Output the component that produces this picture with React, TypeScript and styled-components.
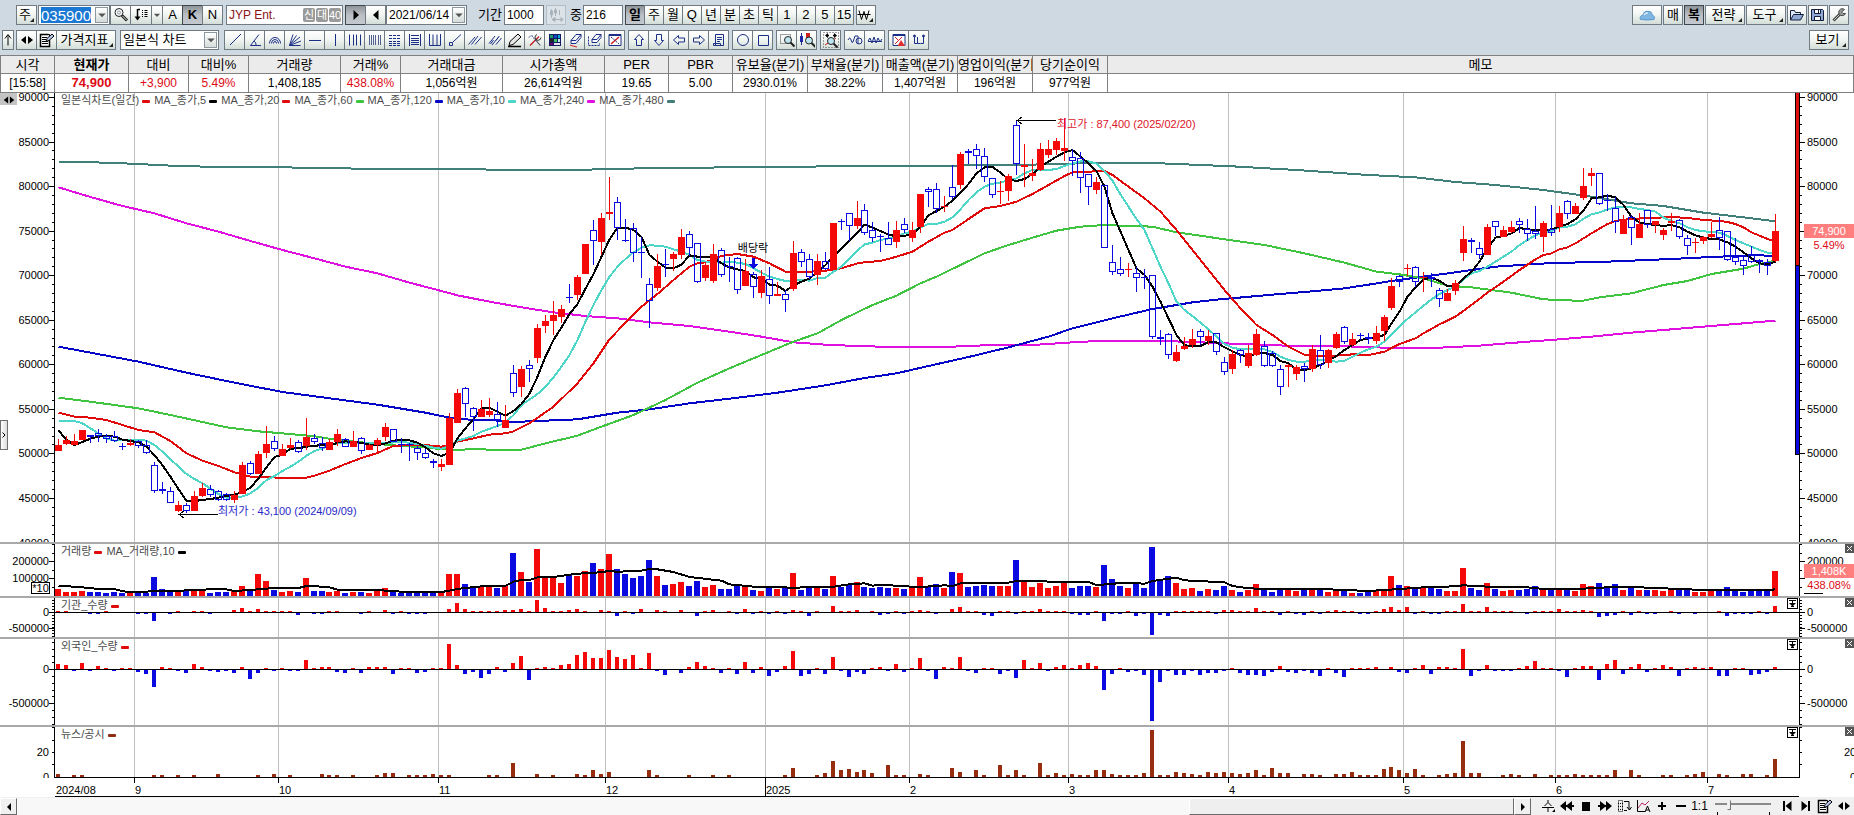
import React from 'react';
import styled, { createGlobalStyle, css } from 'styled-components';

const SANS = '"Liberation Sans", Arial, "Noto Sans CJK KR", sans-serif';
const RED = '#f50808';
const BLUE = '#0a0ae0';
const NAVY = '#1c2f86';

const GlobalStyle = createGlobalStyle`
  * { box-sizing: border-box; }
  body { margin: 0; background: #fff; font-family: ${SANS}; font-size: 13px; color: #000; }
  button, input, select { font-family: inherit; font-size: inherit; color: inherit; }
`;

/* ------------------------------------------------------------------ */
/* Market data                                                         */
/* ------------------------------------------------------------------ */

/* One entry per trading day: direction, high, body top, body bottom, low.
   Levels count down from the top of the scale, three to a pixel. */
const CANDLES = `
r1047,1065,1082,1082 r1038,1050,1062,1066 r1032,1053,1064,1066 r1020,1020,1049,1049 b1035,1036,1040,1060 b1018,1030,1037,1055
b1032,1037,1046,1058 b1022,1037,1054,1056 b1058,1067,1070,1080 r1046,1060,1064,1068 b1050,1053,1069,1074 b1050,1066,1090,1092
b1117,1126,1202,1208 b1176,1197,1203,1211 b1192,1204,1238,1240 r1234,1245,1264,1266 b1238,1246,1262,1268 r1203,1218,1263,1263
r1179,1194,1218,1221 b1186,1198,1216,1222 b1200,1204,1230,1234 b1208,1213,1231,1234 r1203,1216,1231,1238 r1117,1126,1211,1213
b1113,1120,1153,1155 r1082,1092,1152,1152 r1008,1062,1090,1103 b1038,1054,1078,1084 r1062,1077,1097,1099 r1044,1066,1073,1076
b1050,1057,1087,1090 r984,1041,1069,1080 b1033,1043,1056,1062 b1040,1060,1075,1082 r1047,1056,1079,1081 r1017,1032,1056,1069
b1045,1047,1070,1070 r1023,1053,1070,1070 b1040,1043,1084,1092 r1062,1064,1079,1080 r1043,1051,1064,1090 r998,1011,1042,1052
b1018,1018,1057,1057 b1045,1062,1065,1090 b1060,1062,1064,1112 b1067,1073,1089,1109 b1078,1089,1103,1107 b1107,1112,1120,1133
r1108,1121,1131,1144 r970,984,1124,1124 r897,909,998,998 b892,895,943,980 b952,955,982,1022 r931,957,980,982
r924,963,976,982 b936,973,991,1012 r946,990,1013,1013 b826,850,908,922 r828,837,892,920 b810,826,838,876
r702,714,803,818 r676,694,708,730 r633,675,692,734 r645,657,681,700 b582,620,623,638 r555,561,614,629
r461,462,551,553 b391,421,454,526 r370,384,455,496 r261,367,371,390 b321,337,415,450 b387,450,453,455
b400,415,490,515 b440,485,490,564 b565,583,634,713 r491,528,593,603 b476,521,524,560 r486,493,506,544
r417,441,494,507 b422,433,475,497 b460,460,577,579 r516,525,563,574 r462,492,573,578 b474,481,556,560
b500,527,530,577 b500,503,601,612 r506,543,587,587 b545,553,592,624 r540,558,608,624 b530,566,619,641
r577,613,617,619 b600,613,631,665 r453,489,596,604 b477,485,517,530 b492,506,560,566 r492,514,555,585
b487,514,536,540 r399,399,540,540 b387,392,395,420 b370,370,409,453 r333,384,407,417 b342,361,430,434
b395,419,443,455 b432,439,442,486 b396,445,464,466 r392,420,455,475 b384,403,421,430 r397,420,443,455
r312,312,412,430 b291,298,307,350 b280,298,358,370 r318,349,352,366 b224,290,322,328 r186,193,284,297
b178,184,190,222 b163,178,199,238 b175,199,262,275 b265,265,316,324 r273,303,307,343 r253,258,302,333
b90,106,223,255 r163,226,230,290 r207,249,258,272 r159,177,241,244 r150,177,194,203 r144,153,179,196
r85,174,183,212 b178,200,212,258 b186,203,265,308 b253,253,292,345 r262,275,299,311 b286,286,473,475
b466,515,547,555 b501,538,553,557 r519,537,540,560 b530,550,563,606 b537,560,563,597 b556,556,742,746
b720,742,748,765 b730,733,796,806 r765,787,812,815 r741,769,778,780 r717,748,766,774 b716,722,742,765
r721,739,753,765 b730,730,787,794 b802,815,845,854 r780,793,836,851 b777,780,796,818 r766,790,827,833
r717,732,796,797 b754,769,829,832 b784,790,827,830 b824,838,892,914 r823,825,832,890 r826,832,851,869
b820,829,837,876 r765,778,838,847 b735,781,826,838 r778,781,818,833 r727,732,773,778 b708,712,755,762
r730,747,765,769 b730,734,738,751 b730,742,748,762 r708,730,752,762 r675,682,724,752 r565,588,653,659
b554,557,577,590 r523,535,538,557 b527,532,577,590 r545,560,564,605 b549,560,568,590 b594,601,628,650
r597,610,632,633 r571,580,602,614 r408,447,488,512 b445,449,455,488 b457,475,496,508 r402,411,494,495
b394,394,412,438 r408,420,440,440 r394,411,426,430 b384,392,406,430 b386,418,433,452 b348,422,431,447
r394,399,440,486 b345,418,430,437 r348,369,410,425 b331,334,373,386 r339,348,371,373 r234,288,323,329
r234,250,259,288 b250,250,341,345 b313,330,333,362 b322,355,395,429 r375,391,431,432 b375,380,415,465
r370,402,443,444 b361,361,405,413 r392,394,404,429 r414,420,434,449 r369,394,398,423 b387,391,442,446
b435,443,468,494 r443,455,458,489 r437,441,452,461 r396,432,440,445 b381,421,443,480 b424,424,510,513
b443,500,517,525 b495,510,527,554 b467,494,517,520 b507,511,516,548 b507,516,529,554 r372,423,514,516`
  .trim().split(/\s+/)
  .map(s => ({ up: s[0] === 'r', v: s.slice(1).split(',').map(Number) }));

/* Lines are "day:level" pairs. */
type Pair = [number, number];
const pairs = (s: string): Pair[] =>
  s.trim().split(/\s+/).map(p => p.split(':').map(Number) as Pair);
const series = (s: string): Pair[] =>
  s.trim().split(/\s+/).map((v, i) => [i, Number(v)] as Pair);

const MA_LINES = [
  { color: '#417f7a', points: pairs('0:216 3:216 7:219 10:222 13:226 17:229 21:232 28:232 35:235 45:238 52:237 55:240 66:239 73:235 84:232 97:229 108:228 118:225 124:223 128:220 137:219 142:224 147:229 155:240 164:255 170:262 175:276 180:285 186:300 192:320 197:340 201:348 206:368 211:382 215:394') },
  { color: '#e010e0', points: pairs('0:292 4:321 8:348 12:370 16:400 20:425 24:453 28:480 32:505 36:530 40:550 44:578 48:603 50:616 54:635 58:652 62:667 66:678 70:685 74:697 79:708 84:725 88:740 92:757 96:764 101:769 106:771 112:770 117:765 122:765 127:757 131:752 137:752 142:756 146:760 150:764 155:768 160:768 166:773 173:773 178:767 183:757 188:748 192:740 197:728 202:718 207:708 211:700 215:692') },
  { color: '#0606c8', points: pairs('0:770 4:788 10:815 16:848 22:878 28:906 35:928 40:944 46:968 49:983 52:990 54:990 57:996 61:992 65:988 70:968 74:958 79:940 84:926 90:908 96:886 101:864 105:850 109:828 114:801 119:772 124:740 127:715 132:685 137:657 142:637 145:629 151:616 156:606 161:595 164:584 167:573 170:563 175:547 180:530 185:522 188:518 192:517 197:512 202:507 207:501 212:496 215:497') },
  { color: '#3fc440', points: pairs('0:923 3:932 7:945 10:955 14:975 18:996 21:1012 25:1024 28:1030 32:1039 35:1050 40:1062 43:1068 46:1072 48:1078 50:1080 52:1077 54:1079 58:1079 61:1060 65:1037 68:1010 72:975 76:930 80:878 84:835 88:795 92:755 95:730 98:690 102:645 105:617 108:580 110:560 113:525 116:490 119:465 122:443 125:422 128:410 131:405 133:407 137:410 140:427 143:437 146:448 151:465 156:490 161:518 165:545 168:553 171:565 174:587 177:592 182:608 186:628 190:632 191:632 193:622 197:610 201:585 204:573 207:552 211:536 213:522 215:512') },
  { color: '#e00a0a', points: pairs('0:968 2:980 4:983 6:990 8:1005 10:1020 12:1027 14:1053 16:1090 18:1112 20:1128 22:1147 24:1160 26:1161 28:1164 31:1163 32:1157 34:1142 36:1122 38:1104 40:1089 41:1078 42:1068 44:1065 46:1065 48:1070 49:1066 50:1055 52:1045 54:1034 56:1030 57:1024 59:1000 62:950 65:880 67:820 69:748 71:698 73:650 75:612 77:570 79:530 80:520 81:517 83:498 85:492 87:500 89:520 91:545 94:545 96:542 98:535 100:520 101:517 103:513 105:500 107:485 108:470 109:455 111:428 112:420 114:387 116:355 118:348 120:335 122:312 124:285 126:258 127:247 129:245 131:243 132:255 134:290 136:325 138:365 140:420 142:480 144:540 146:600 148:655 150:705 152:735 154:770 156:794 158:798 160:797 162:793 164:795 166:785 168:762 170:745 171:730 173:703 175:680 177:645 179:608 181:575 183:540 185:508 186:495 187:490 188:478 189:472 190:460 191:445 192:430 194:402 195:393 197:386 199:385 201:382 202:381 204:384 206:390 208:393 209:396 210:402 211:412 212:427 213:437 214:447 215:454') },
  { color: '#4bd6c8', points: pairs('0:993 2:993 3:1000 4:1015 5:1030 6:1045 7:1052 9:1049 10:1049 11:1052 12:1065 13:1085 14:1108 15:1130 16:1152 17:1167 18:1180 19:1196 20:1212 21:1223 22:1224 23:1219 24:1210 25:1193 26:1170 27:1158 28:1143 29:1130 30:1115 31:1097 32:1083 33:1075 34:1066 35:1060 38:1060 41:1060 43:1055 45:1062 47:1073 48:1076 49:1068 50:1052 51:1045 52:1038 53:1025 55:1008 56:998 57:975 58:945 60:912 61:890 62:862 63:830 64:795 65:750 66:695 67:645 68:600 69:560 70:530 71:507 72:487 73:473 74:466 75:467 76:470 77:478 78:485 79:495 80:510 81:515 83:518 84:516 85:518 86:522 87:535 88:548 89:560 90:567 91:573 93:570 94:572 95:564 96:563 97:545 98:530 99:505 100:482 101:463 102:458 103:450 104:445 105:440 106:430 107:425 108:412 109:402 110:402 111:395 112:382 113:358 114:330 115:307 116:290 117:281 118:278 119:270 120:265 121:250 122:240 124:240 125:237 126:228 127:220 128:214 129:214 130:221 131:243 132:272 133:313 134:350 135:387 136:420 137:475 138:530 139:580 140:635 141:660 142:678 143:698 144:718 145:740 146:762 147:773 148:778 150:776 151:778 152:786 153:800 154:810 155:815 156:815 158:810 160:815 161:812 162:800 163:788 164:778 165:770 166:755 167:733 168:709 169:687 170:667 171:647 172:628 173:612 174:600 175:590 176:568 177:550 178:543 179:530 180:515 181:500 182:485 183:465 184:450 185:436 186:428 187:423 188:412 189:410 190:403 191:386 192:373 193:367 194:358 195:352 197:352 198:357 199:360 200:365 201:383 202:393 203:400 204:412 205:420 206:424 207:426 208:428 209:438 210:450 211:460 212:470 213:480 214:488 215:489') },
  { color: '#000', points: series('1021 1050 1065 1056 1046 1040 1038 1040 1049 1053 1057 1070 1096 1126 1160 1198 1232 1233 1230 1227 1223 1218 1214 1206 1193 1165 1132 1101 1094 1076 1075 1070 1068 1064 1068 1058 1054 1057 1058 1064 1066 1060 1052 1049 1051 1058 1072 1090 1098 1088 1045 1015 987 955 953 965 977 963 942 911 860 800 750 712 672 642 596 552 500 448 413 413 420 441 495 515 533 535 524 496 500 500 502 520 533 538 543 562 566 584 587 603 586 575 566 545 525 500 475 452 428 404 413 423 434 439 437 435 410 376 363 350 332 308 282 250 232 231 248 268 273 267 252 230 215 200 187 180 200 220 243 290 370 425 480 535 555 590 635 685 735 766 768 768 756 757 772 784 795 799 790 789 795 813 820 838 840 834 825 812 798 780 765 750 745 741 735 700 665 620 592 568 563 573 588 590 565 545 515 475 443 438 430 414 418 420 421 418 410 402 388 362 325 322 317 322 345 380 398 402 405 408 405 412 425 436 443 447 448 457 470 487 505 520 523 515') },
];

const VOLUME_TOPS = `177 185 185 181 185 185 188 186 188 188 188 187 141 177 180 181 182 181 183 188 186 186 182 168 180 132 153 180 186 183 186 144 182 183 186 183 188 186 186 188 180 174 184 187 187 187 187 187 187 132 132 162 166 168 168 174 166 69 126 156 57 143 141 159 132 138 123 99 117 72 117 132 144 136 88 138 165 162 156 168 153 171 165 177 177 165 171 180 183 174 177 174 129 178 171 171 177 138 171 164 156 171 174 171 174 174 177 174 141 168 162 174 126 129 171 168 165 168 168 168 88 153 171 157 174 168 156 174 168 168 171 105 147 168 174 160 174 51 146 138 159 177 174 183 177 180 168 180 186 178 162 179 186 179 180 183 180 178 180 186 182 180 189 189 185 183 175 138 165 168 175 173 168 177 183 183 114 174 180 159 177 183 180 180 177 168 178 178 177 180 183 162 168 159 174 162 180 174 180 180 180 183 177 180 180 186 186 183 183 171 182 186 183 182 182 123`
  .split(' ').map(Number);

const VOLUME_MA = pairs('0:167 3:172 5:177 7:177 8:184 9:186 12:184 15:182 18:180 19:177 21:178 22:183 24:180 27:174 30:174 31:168 33:170 34:172 35:179 40:180 41:182 43:185 48:186 49:182 50:177 51:174 53:169 56:167 57:155 58:150 59:150 60:142 62:141 64:134 66:129 68:127 69:122 70:126 71:124 73:122 74:117 75:118 77:126 79:141 83:152 84:163 87:170 92:173 97:170 99:163 101:160 102:167 103:164 106:169 108:171 111:166 112:168 113:160 116:158 119:158 120:153 122:154 129:156 130:165 132:162 133:158 136:161 137:153 140:143 141:151 146:157 147:168 149:175 153:178 158:177 164:183 168:177 171:172 174:170 176:166 179:170 184:172 186:177 191:176 194:172 198:172 202:176 206:180 214:180 215:178');

const INSTITUTION = pairs('0:3 1:2 4:-4 5:-4 6:3 10:-4 11:-4 12:-25 14:-3 15:3 17:3 18:3 19:-4 22:6 23:12 24:3 25:10 26:3 27:3 28:3 29:3 30:-7 32:-3 33:-3 34:4 35:4 38:-3 39:3 41:6 42:-3 43:4 44:-4 45:-4 46:-4 49:9 50:27 51:9 52:3 53:3 54:3 55:3 56:6 57:6 58:9 59:3 60:36 61:12 62:3 63:3 64:6 65:10 66:3 68:6 69:3 70:-10 71:3 72:-4 73:10 75:6 76:3 78:6 80:-10 81:3 82:6 84:3 85:-4 86:10 87:-3 88:3 89:-4 90:3 91:-4 92:6 93:3 94:-9 95:3 97:18 98:3 99:3 100:6 102:3 103:-6 104:-4 105:3 106:-4 107:3 108:6 109:3 110:-4 112:9 113:15 114:3 115:3 116:-6 117:-10 118:3 119:3 120:-4 121:3 122:3 123:9 124:3 125:3 126:3 127:-4 128:-6 129:-6 130:3 131:-25 132:-4 133:-4 134:3 135:-10 136:-4 137:-67 138:-6 139:-10 140:3 141:3 142:3 143:3 144:3 145:-4 146:6 147:6 148:3 149:3 150:12 151:3 152:3 153:-7 154:3 155:-4 156:-7 157:3 158:-4 159:3 160:6 161:3 162:3 163:-4 164:-4 165:3 166:9 167:15 168:6 169:15 170:-4 171:3 172:-4 173:-4 174:3 175:3 176:24 177:3 178:3 179:15 180:3 181:3 182:3 184:-4 185:3 186:3 187:3 188:9 189:3 190:3 191:6 192:3 193:-13 194:-10 195:-7 196:3 197:-7 198:3 199:-3 200:-3 202:3 203:-4 205:-4 208:3 209:-10 210:-4 211:-4 212:-4 213:3 214:-4 215:18');

const FOREIGN = pairs('0:15 1:12 2:-4 3:18 4:-4 5:9 6:3 7:-4 8:3 9:3 10:-7 11:-13 12:-52 13:6 14:3 15:-3 16:-10 17:15 18:6 19:-4 20:-7 21:-4 22:-10 23:6 24:-28 25:-10 26:3 27:-4 28:3 29:-4 30:-4 31:27 32:4 33:6 34:6 35:-7 36:-10 37:3 38:-10 39:6 40:6 41:6 42:-13 43:3 44:3 45:-10 46:-7 47:3 48:3 49:75 50:12 51:-13 52:-7 53:-25 54:-13 55:6 56:-7 57:18 58:39 59:-31 60:4 61:6 62:4 63:12 64:15 65:42 66:51 67:33 68:33 69:57 70:37 71:30 72:42 73:3 74:48 75:-4 76:-16 78:-10 79:6 80:21 81:9 82:3 83:-10 84:3 85:-13 86:21 87:-10 88:6 89:-19 90:-7 91:9 92:54 93:-19 94:-13 95:3 96:-13 97:37 98:-4 99:-22 100:-7 101:-13 102:3 103:6 104:-4 105:15 106:-7 107:3 108:34 109:-4 110:-28 111:6 112:3 113:37 114:-4 115:-10 116:3 117:3 118:-13 119:-4 120:-25 121:27 122:3 123:18 124:-4 125:6 126:12 127:3 128:12 129:18 130:9 131:-61 132:-13 133:3 134:-7 135:-4 136:-16 137:-152 138:-37 139:-4 140:-16 141:-16 142:-4 143:-16 144:-10 145:-10 146:-4 147:3 148:-10 149:-16 150:-16 151:-19 152:-7 153:9 154:-7 155:-10 156:-4 157:-10 158:-19 159:3 160:-10 161:-22 162:3 163:3 164:3 165:6 167:6 168:-7 169:-10 170:3 171:12 172:-13 173:6 174:6 175:3 176:60 177:-19 178:-4 179:12 180:-4 181:-4 182:-4 183:3 184:9 185:24 186:3 187:3 188:-4 189:-22 190:3 191:9 192:9 193:-31 194:15 195:27 196:-13 197:6 198:15 199:-7 200:3 201:12 202:6 203:-19 204:3 205:6 206:3 207:6 208:-19 209:-19 210:3 211:3 212:-16 213:-13 214:-7 215:6');

const NEWS = pairs('0:9 2:6 3:6 12:6 13:6 15:6 17:6 20:9 25:6 27:9 29:6 33:9 34:6 35:6 37:6 40:6 41:12 42:12 44:6 45:6 46:6 47:9 48:6 49:6 54:6 55:6 57:42 60:9 62:6 65:9 66:6 67:21 68:9 69:15 74:21 75:6 79:6 82:6 84:6 91:6 92:27 95:6 96:12 97:48 98:21 99:24 100:15 101:21 102:12 104:36 105:6 106:6 108:9 109:6 112:27 113:15 115:21 116:6 118:36 119:6 120:21 121:6 123:42 124:6 125:12 126:6 127:9 128:6 129:6 130:21 131:21 132:9 133:6 134:6 135:6 136:12 137:141 138:6 139:6 140:15 141:12 142:9 143:6 144:15 145:12 146:15 147:12 148:9 149:12 150:21 151:6 152:27 153:12 154:12 156:9 157:9 158:6 160:9 161:9 162:15 163:6 164:6 165:6 166:24 167:30 168:21 169:12 170:24 171:6 173:6 174:9 175:12 176:108 177:12 178:12 181:6 182:9 183:6 185:9 187:6 188:6 189:6 190:9 191:6 192:6 193:6 194:6 195:21 197:21 198:6 201:6 202:6 204:6 205:9 206:15 208:9 209:6 211:9 212:9 214:6 215:54');

const MONTHS = [
  { x: 79, label: '9' }, { x: 223, label: '10' }, { x: 383, label: '11' }, { x: 550, label: '12' },
  { x: 710, label: '2025', year: true }, { x: 854, label: '2' }, { x: 1013, label: '3' },
  { x: 1173, label: '4' }, { x: 1348, label: '5' }, { x: 1500, label: '6' }, { x: 1652, label: '7' },
];

const QUOTE = [
  { head: '시각', value: '[15:58]', w: 55 },
  { head: '현재가', value: '74,900', w: 74, red: true, strong: true },
  { head: '대비', value: '+3,900', w: 60, red: true },
  { head: '대비%', value: '5.49%', w: 60, red: true },
  { head: '거래량', value: '1,408,185', w: 92 },
  { head: '거래%', value: '438.08%', w: 60, red: true },
  { head: '거래대금', value: '1,056억원', w: 102 },
  { head: '시가총액', value: '26,614억원', w: 102 },
  { head: 'PER', value: '19.65', w: 64 },
  { head: 'PBR', value: '5.00', w: 64 },
  { head: '유보율(분기)', value: '2930.01%', w: 75 },
  { head: '부채율(분기)', value: '38.22%', w: 75 },
  { head: '매출액(분기)', value: '1,407억원', w: 75 },
  { head: '영업이익(분기)', value: '196억원', w: 75 },
  { head: '당기순이익', value: '977억원', w: 75 },
  { head: '메모', value: '', w: 0 },
];

/* ------------------------------------------------------------------ */
/* Icons                                                               */
/* ------------------------------------------------------------------ */

const Svg = styled.svg`
  display: block;
  flex: none;
  fill: none;
  stroke: ${NAVY};
  stroke-width: 1;
`;

const lens = (x: number, y: number) => (
  <g>
    <circle cx={x} cy={y} r="3.5" fill="#bfe6f0" stroke="#222" />
    <path d={`M${x + 2.5} ${y + 2.5}l4 4`} stroke="#222" strokeWidth="2" />
  </g>
);

const ICONS: Record<string, React.ReactNode> = {
  search: <g stroke="#222"><circle cx="6" cy="5.5" r="4" fill="#f4f8ff" /><circle cx="6" cy="5.5" r="1.5" stroke="#999" /><path d="M9 8.5l5 5" strokeWidth="3" /><path d="M9.500 9l4 4" stroke="#ddd" /></g>,
  listDown: <g stroke="#000"><path d="M4.500 2v10M5 2.500h2" strokeWidth="1.500" /><path d="M1.500 9.500l3 4 3-4z" fill="#000" stroke="none" /><path d="M9 3.500h1M11.500 3.500h3M9 5.500h1M11.500 5.500h3M9 7.500h1M11.500 7.500h3M9 9.500h1M11.500 9.500h3" /></g>,
  chevron: <path d="M3 6h10l-5 5z" fill="#555" stroke="none" />,
  play: <path d="M5.500 3l5.500 5-5.500 5z" fill="#000" stroke="none" />,
  back: <path d="M10.500 3L5 8l5.500 5z" fill="#000" stroke="none" />,
  candlesMove: <g stroke="#a9b3bb" fill="#a9b3bb"><path d="M3.500 2v9M7.500 1v8M11.500 3v5M6 12.500h8M4 12.500l3-2v4zM15 12.500l-2-2v4z" /><path d="M2.500 4h2v4h-2zM6.500 3h2v3h-2z" /></g>,
  won: <g stroke="#000"><path d="M3 3.500l2.500 9 2.500-8 2.500 8 2.500-9" /><path d="M1.500 7.500h13" /></g>,
  up: <path d="M8 13.500v-10M5 6.500l3-4 3 4" stroke="#000" />,
  leftRight: <path d="M7 4v8L2 8zM9 4v8l5-4z" fill="#000" stroke="none" />,
  memo: <g stroke="#000"><path d="M1.500 2.500h9v12h-9z" fill="#fff" /><path d="M10.500 8v6.500h-9v-12h8" strokeWidth="1.500" /><path d="M3 5.500h5M3 7.500h4M3 9.500h6M3 11.500h6" /><path d="M7 9.500l1-3 5-4.500 2 2-5 4.500z" fill="#b9c9ee" /></g>,
  line: <path d="M3 13L14 2" />,
  angle: <path d="M12 2.500L3.500 13.500H14M7 9q2.500 1.500 2 4.500" />,
  arcs: <g><path d="M2.500 11.500a5.500 6 0 0 1 11 0M4.500 11.500a3.500 4 0 0 1 7 0M6.500 11.500a1.500 2 0 0 1 3 0" /></g>,
  fan: <path d="M2.500 13.500L6 2.500M2.500 13.500l7-10M2.500 13.500L13 5M2.500 13.500L14 9M2.500 13.500h11" />,
  hline: <path d="M2 8.500h12" />,
  vline: <path d="M8.500 2v12" />,
  vlines4: <path d="M2.500 2.500v11M6.500 2.500v11M9.500 2.500v11M13.500 2.500v11" />,
  vlines6: <path d="M2.500 3v10M4.500 3v10M6.500 3v10M8.500 3v10M11.500 3v10M13.500 3v10" stroke="#51608f" />,
  fib: <path d="M2 3.500h12M2 13.500h12M2 6.500h12M2 9.500h12M2 11.500h12" strokeDasharray="3 1" />,
  fibBox: <path d="M2.500 2v12M13.500 2v12M4 3.500h8M4 6.500h8M4 8.500h8M4 10.500h8M4 12.500h8" />,
  cycle: <path d="M2.500 2v11.500h3.500V2.500M6 13.500h4V2.500M10 13.500h3.500V2" />,
  trend: <g><path d="M2.500 10.500h3v3h-3z" /><path d="M6 10l8-7.500" /></g>,
  parallel: <path d="M1.500 12.500L8 5M4.500 12.500L11 4M8 12.500L14.500 5" />,
  parallel2: <path d="M2 11.500L8 4M5 13L12 4.500M9 12.500L14.500 6M3.500 12l3-4M9 8.500l3-4" />,
  pencil: <g stroke="#000"><path d="M3 9.500l8-7.500 3 3-8 7.500-4 1z" fill="#e8e8e8" /><path d="M1 14.500h13" strokeWidth="1.500" /></g>,
  tools: <g><path d="M3 13.500l9-9" stroke="#c02020" strokeWidth="1.500" /><path d="M2 5.500q3-4 5 1l6 7" stroke={NAVY} strokeDasharray="2 1" /><path d="M8 7l5 6" stroke="#555" /><path d="M10 2.500a3 3 0 1 0 4 3" stroke="#333" /></g>,
  palette: <g stroke="none"><path d="M2 2h12v12H2z" fill="#111c60" /><path d="M3 3h3v3H3z" fill="#1e9f6a" /><path d="M7 3h3v3H7z" fill="#1848c0" /><path d="M11 3h2v3h-2z" fill="#0ad" /><path d="M3 7h3v3H3z" fill="#222" /><path d="M7 7h3v3H7z" fill="#40c060" /><path d="M11 7h2v3h-2z" fill="#bfe8e8" /><path d="M3 11h3v2H3z" fill="#700070" /><path d="M7 11h6v2H7z" fill="#e8e0f0" /></g>,
  eraser: <g><path d="M4 8.500l5-6h5l-5 6zM4 8.500v3h5l5-6v-3" fill="#eef2fb" /><path d="M3 13l3 1 4 1" stroke="#d02020" /></g>,
  eraseAll: <g><path d="M5 7.500l4-5h5l-4 5zM5 7.500v3h5l4-5v-3" fill="#fff" /><path d="M1.500 4.500v9h11v-2" strokeDasharray="2 1" /></g>,
  chartX: <g><path d="M2 2.500h12v11H2z" fill="#fff" /><path d="M2 3h12" strokeWidth="2" /><path d="M4 12l8-7" stroke="#d02020" strokeWidth="1.500" /><path d="M4 5l8 7" strokeDasharray="2 1" /></g>,
  arrowUp: <path d="M8 2.500l4.500 5h-2v6h-5v-6h-2z" />,
  arrowDown: <path d="M8 13.500l4.500-5h-2v-6h-5v6h-2z" />,
  arrowLeft: <path d="M2.500 8l5-4.500v2.500h6v4h-6v2.500z" />,
  arrowRight: <path d="M13.500 8l-5-4.500v2.500h-6v4h6v2.500z" />,
  note: <g><path d="M4.500 2.500h8v11h-8z" /><path d="M6 5.500h5M6 7.500h5M6 9.500h3M2.500 11.500v2h7v-2z" /></g>,
  circle: <circle cx="8" cy="8" r="5.500" />,
  square: <path d="M3.500 3.500h10v10h-10z" />,
  zoomArea: <g><path d="M1.500 2.500h10v9h-10z" stroke="#444" strokeDasharray="1 1" />{lens(9, 8)}</g>,
  zoomCandle: <g><path d="M1 4h3v6H1z" fill="#2020c0" stroke="none" /><path d="M2.500 1v12" /><path d="M7 1h4v5H7z" fill="#d02020" stroke="none" />{lens(10, 8.500)}</g>,
  zoomFit: <g><path d="M.5.5h15v15H.5z" stroke="#444" strokeDasharray="1 2" /><path d="M3 3.500h3M10 3.500h3" stroke="#000" strokeWidth="1.500" /><path d="M2 3.500l3-2.500v5zM14 3.500l-3-2.500v5z" fill="#000" stroke="none" /><path d="M2 13L13 6" stroke="#d02020" />{lens(8, 9)}</g>,
  waveInfo: <g><path d="M1 8q2-4 3 0t2 2l2-6h3v8" /><circle cx="12" cy="9" r="3" /></g>,
  waves: <path d="M1 9.500h14M1 9l2-3 2 5 2-6 2 6 2-5 2 4 2-3" />,
  chartAlert: <g><path d="M2 2.500h12v11H2z" fill="#fff" /><path d="M2 3h12" strokeWidth="2" /><path d="M4 12l7-7M4 5l4 4" stroke="#d02020" /><path d="M10 8l4 6H6.500z" fill="#e03030" stroke="none" /></g>,
  signal: <g><path d="M3.500 5v6.500h3V5M9.500 11.500h3V5M6.500 11.500h3" /><circle cx="3.500" cy="4" r="1" fill={NAVY} /><circle cx="12.500" cy="4" r="1" fill={NAVY} /></g>,
  cloud: <g><path d="M1.500 12.500q-1.500-3.500 2.500-4.500 1-4.500 5-3.500 4-.500 4 3.500 3.500 1 2 4.500-7 1-13.500 0z" fill="#7fb6e2" stroke="#5b97cc" /><path d="M5 8q1-2.500 4-2" stroke="#d8ecfa" strokeWidth="1.500" /></g>,
  folder: <g stroke="#141c3c"><path d="M1.500 13V3.500h4l1 2h5v2" fill="#dfe8f6" /><path d="M1.500 13l3-5.500h10l-3 5.500z" fill="#8fa8d4" /></g>,
  save: <g stroke="#141c3c"><path d="M1.500 2.500h11l1 1v10h-12z" fill="#8fa8d4" /><path d="M4.500 2.500h6v4h-6zM4.500 9.500h6v4h-6z" fill="#fff" /><path d="M8.500 3v3" /></g>,
  wrench: <g><path d="M2.500 13.500L9 7" stroke="#444" strokeWidth="3" /><path d="M3 13l6-6" stroke="#ccc" /><path d="M13.500 2.500a3.500 3.500 0 1 0 1 4L12 6.500 10.500 5z" fill="#999" stroke="#444" /></g>,
  collapse: <g stroke="#000"><path d="M2 9.500h12M8 4.500L4.500 8M8 4.500L11.500 8M8 2v2.500M8 10v4" /><path d="M12 14h3v-3z" fill="#000" stroke="none" /></g>,
  rewind: <path d="M7 3v4h1l5-4v4h2v2h-2v4L8 9H7v4L1 8z" fill="#000" stroke="none" />,
  forward: <path d="M9 3v4H8L3 3v4H1v2h2v4l5-4h1v4l6-5z" fill="#000" stroke="none" />,
  stop: <path d="M4 4h8v9H4z" fill="#000" stroke="none" />,
  compress: <g stroke="#000"><path d="M2.500 2.500h4v11h-4zM2 5.500h5M2 8.500h5M2 11.500h5" strokeDasharray="1 1" /><path d="M8 3.500h5v8M8 12.500h3M11 9l2.500 3 2-3" /></g>,
  chartA: <g><path d="M2.500 2v11.500H10" stroke="#000" /><path d="M3 10l4-5 3 2 4-4" stroke="#c02060" /><path d="M10 14l2.500-6 2.500 6M11 12h3" stroke="#000" /></g>,
  plus: <path d="M4 8h8M8 4v8" stroke="#000" strokeWidth="2" />,
  minus: <path d="M3 8h10" stroke="#000" strokeWidth="2" />,
  first: <path d="M4 3h2v10H4zM12.500 3v10L6.500 8z" fill="#000" stroke="none" />,
  last: <path d="M10 3h2v10h-2zM3.500 3v10l6-5z" fill="#000" stroke="none" />,
  scrollLeft: <path d="M10 4v8L6 8z" fill="#000" stroke="none" />,
  scrollRight: <path d="M6 4v8l4-4z" fill="#000" stroke="none" />,
};

const Icon = ({ name, size = 16 }: { name: string; size?: number }) => (
  <Svg width={size} height={size} viewBox="0 0 16 16" aria-hidden="true">{ICONS[name]}</Svg>
);

/* ------------------------------------------------------------------ */
/* Toolbar parts                                                       */
/* ------------------------------------------------------------------ */

const Page = styled.div`
  display: flex;
  flex-direction: column;
  min-height: 100vh;
  background: #fff;
`;

const Toolbar = styled.header`
  display: flex;
  flex-direction: column;
  gap: 5px;
  padding: 5px 5px 5px 2px;
  background: #ced9e2;
`;

const ToolRow = styled.div<{ $indent?: number }>`
  display: flex;
  align-items: center;
  height: 20px;
  padding-left: ${p => p.$indent || 0}px;
`;

const Group = styled.div<{ $before?: number; $gap?: number; $end?: boolean }>`
  display: flex;
  flex: none;
  margin-left: ${p => (p.$end ? 'auto' : `${p.$before || 0}px`)};
  & > * + * { margin-left: ${p => (p.$gap === undefined ? -1 : p.$gap)}px; }
`;

const ToolButton = styled.button<{ $w?: number; $pressed?: boolean; $menu?: boolean }>`
  position: relative;
  display: flex;
  flex: none;
  align-items: center;
  justify-content: center;
  width: ${p => p.$w || 21}px;
  height: 20px;
  padding: 0;
  border: 1px solid #707a82;
  background: linear-gradient(#ffffff, #f3f7f4 45%, #d3ddd8);
  white-space: nowrap;
  line-height: 16px;
  overflow: hidden;
  ${p => p.$pressed && css`
    background: linear-gradient(#8f9498, #b9bfc5 50%, #c3c9cf);
    border-color: #3f464c;
    font-weight: bold;
  `}
  ${p => p.$menu && css`
    padding-right: 3px;
    &::after {
      content: '';
      position: absolute;
      right: 2px;
      bottom: 2px;
      border-style: solid;
      border-width: 0 0 4px 4px;
      border-color: transparent transparent #222;
    }
  `}
  &:disabled { border-color: #b4bec6; background: #dbe3e9; }
`;

const Field = styled.div<{ $w: number; $before?: number }>`
  display: flex;
  flex: none;
  align-items: center;
  width: ${p => p.$w}px;
  height: 20px;
  margin-left: ${p => p.$before || 0}px;
  padding-left: 2px;
  border: 1px solid #707a82;
  background: #fff;
`;

const FieldInput = styled.input<{ $selected?: boolean; $color?: string }>`
  min-width: 0;
  flex: 1;
  height: 16px;
  padding: 0;
  border: 0;
  outline: 0;
  background: transparent;
  font-size: 12px;
  color: ${p => p.$color || '#000'};
  ${p => p.$selected && css`
    flex: none;
    width: 50px;
    background: #1a78d2;
    color: #fff;
    font-size: 15px;
  `}
`;

const DropButton = styled.button`
  display: flex;
  align-items: center;
  justify-content: center;
  width: 13px;
  height: 16px;
  margin: 0 1px 0 auto;
  padding: 0;
  border: 1px solid #8d979e;
  background: linear-gradient(#fff, #d5dcda);
`;

const TypeSelect = styled.select`
  flex: 1;
  min-width: 0;
  height: 18px;
  padding: 0;
  border: 0;
  outline: 0;
  appearance: none;
  background: transparent;
  line-height: 18px;
`;

const Label = styled.label<{ $before: number; $after: number }>`
  flex: none;
  margin: 0 ${p => p.$after}px 0 ${p => p.$before}px;
  line-height: 18px;
`;

const Badge = styled.span`
  flex: none;
  width: 12px;
  height: 14px;
  margin-right: 1px;
  border-radius: 2px;
  background: #9a9a9a;
  color: #fff;
  font-size: 11px;
  line-height: 14px;
  text-align: center;
`;

/* ------------------------------------------------------------------ */
/* Quote table                                                         */
/* ------------------------------------------------------------------ */

const QuoteTable = styled.table`
  width: 100%;
  table-layout: fixed;
  border-collapse: separate;
  border-spacing: 0;
  border-top: 1px solid #808080;
`;

const cell = css<{ $strong?: boolean }>`
  padding: 0;
  border-right: 1px solid #808080;
  border-bottom: 1px solid #808080;
  overflow: hidden;
  white-space: nowrap;
  text-align: center;
  font-weight: ${p => (p.$strong ? 'bold' : 'normal')};
  &:first-child { border-left: 1px solid #808080; }
`;

const HeadCell = styled.th<{ $strong?: boolean }>`
  ${cell}
  height: 18px;
  background: #ebebeb;
  line-height: 17px;
`;

const ValueCell = styled.td<{ $strong?: boolean; $red?: boolean }>`
  ${cell}
  height: 19px;
  font-size: ${p => (p.$strong ? 13 : 12)}px;
  line-height: 18px;
  color: ${p => (p.$red ? '#dc0a14' : '#000')};
`;

/* ------------------------------------------------------------------ */
/* Chart parts                                                         */
/* ------------------------------------------------------------------ */

const PLOT_W = 1744;
const slot = (i: number) => Math.round(3 + i * 7.985);
const pct = (x: number) => `${(x / PLOT_W) * 100}%`;

const Chart = styled.main`
  position: relative;
  flex: 1;
`;

const PanelRow = styled.section<{ $line?: boolean }>`
  display: grid;
  grid-template-columns: 55px minmax(0, 1fr) 55px;
  border-bottom: ${p => (p.$line ? '2px solid #a9a9a9' : '0')};
`;

const PlotBox = styled.div`
  position: relative;
`;

const PlotSvg = styled.svg`
  display: block;
  width: 100%;
  shape-rendering: crispEdges;
`;

const AxisSvg = styled.svg`
  display: block;
  overflow: hidden;
  shape-rendering: crispEdges;
  font-size: 11px;
`;

const AxisBox = styled.div`
  position: relative;
  overflow: hidden;
`;

const Legend = styled.div`
  position: absolute;
  top: 0;
  left: 6px;
  display: flex;
  align-items: center;
  color: #4c4c4c;
  font-size: 11px;
  line-height: 14px;
  white-space: nowrap;
`;

const Dash = styled.span<{ $color: string }>`
  width: 8px;
  height: 3px;
  margin: 2px 4px 0 3px;
  border-radius: 1px;
  background: ${p => p.$color};
`;

const Note = styled.span<{ $color: string; $center?: boolean }>`
  position: absolute;
  color: ${p => p.$color};
  font-size: 11px;
  line-height: 14px;
  white-space: nowrap;
  ${p => p.$center && css`transform: translateX(-50%);`}
`;

const Tag = styled.div<{ $top: number }>`
  position: absolute;
  top: ${p => p.$top}px;
  left: 5px;
  right: 0;
  color: #dc0a14;
  font-size: 11px;
  line-height: 14px;
  text-align: center;
`;

const TagValue = styled.div`
  background: #ff7f7f;
  color: #fff;
`;

const UnitBox = styled.span`
  position: absolute;
  right: 5px;
  bottom: 2px;
  width: 19px;
  height: 12px;
  border: 1px solid #000;
  background: #fff;
  font-size: 11px;
  line-height: 11px;
  text-align: center;
`;

const UnitMark = styled.span`
  position: absolute;
  left: 5px;
  bottom: 2px;
  width: 19px;
  height: 1px;
  background: #000;
`;

const CornerButton = styled.button`
  position: absolute;
  top: 0;
  right: 1px;
  width: 11px;
  height: 11px;
  padding: 0;
  border: 1px solid #000;
  background: #fff;
  display: grid;
  place-items: center;
`;

const CloseButton = styled.button`
  position: absolute;
  top: 0;
  right: 0;
  width: 9px;
  height: 9px;
  padding: 0;
  border: 0;
  background: #555;
  display: grid;
  place-items: center;
`;

const MoveButton = styled.button`
  position: absolute;
  top: 0;
  left: 0;
  width: 17px;
  height: 12px;
  padding: 0;
  border: 0;
  background: #c4c4c4;
  display: grid;
  place-items: center;
`;

const SideHandle = styled.button`
  position: absolute;
  top: 327px;
  left: 0;
  width: 8px;
  height: 30px;
  padding: 0;
  border: 1px solid #707070;
  background: linear-gradient(90deg, #fff, #ddd);
  display: grid;
  place-items: center;
`;

const DateBox = styled(PlotBox)`
  height: 19px;
  border-bottom: 1px solid #000;
`;

const DateLabel = styled.span`
  position: absolute;
  top: 5px;
  margin-left: 1px;
  font-size: 11px;
  line-height: 14px;
`;

type Tick = { y: number; label?: string; dx?: number };

const Axis = ({ side, height, ticks, minor }: {
  side: 'left' | 'right'; height: number; ticks: Tick[]; minor: number[];
}) => {
  const left = side === 'left';
  return (
    <AxisSvg width="55" height={height}>
      <rect x={left ? 54 : 0} y="0" width="1" height={height} />
      {minor.map(y => <rect key={y} x={left ? 52 : 1} y={Math.round(y)} width="2" height="1" />)}
      {ticks.map(t => (
        <g key={t.y}>
          <rect x={left ? 49 : 1} y={t.y} width={t.dx ? 0 : 5} height="1" />
          {t.label && <text x={left ? 49 : 8 + (t.dx || 0)} y={t.y + 4} textAnchor={left ? 'end' : 'start'}>{t.label}</text>}
        </g>
      ))}
    </AxisSvg>
  );
};

const Grid = ({ height }: { height: number }) => (
  <>{MONTHS.map(m => <rect key={m.x} x={m.x} y="0" width="1" height={height} fill="#c0c0c0" />)}</>
);

const Plot = ({ height, children, after }: { height: number; children: React.ReactNode; after?: React.ReactNode }) => (
  <PlotBox>
    <PlotSvg height={height} viewBox={`0 0 ${PLOT_W} ${height}`} preserveAspectRatio="none">
      <Grid height={height} />
      {children}
    </PlotSvg>
    {after}
  </PlotBox>
);

const Line = ({ points, color, toY }: { points: Pair[]; color: string; toY: (v: number) => number }) => (
  <polyline
    points={points.map(([i, v]) => `${slot(i) + 0.5},${toY(v)}`).join(' ')}
    fill="none" stroke={color} strokeWidth="2" vectorEffect="non-scaling-stroke"
  />
);

const Candle = ({ i }: { i: number }) => {
  const { up, v } = CANDLES[i];
  const [high, top, bottom, low] = v.map(n => Math.round(n / 3 - 3));
  const x = slot(i);
  const color = up ? RED : BLUE;
  const h = Math.max(1, bottom - top);
  return (
    <g fill={color}>
      <rect x={x} y={high} width="1" height={Math.max(0, top - high)} />
      <rect x={x} y={bottom} width="1" height={Math.max(0, low - bottom)} />
      {up || h < 3
        ? <rect x={x - 3} y={top} width="7" height={h} />
        : <path d={`M${x - 2.5} ${top + 0.5}h6v${h - 1}h-6z`} fill="none" stroke={color} />}
    </g>
  );
};

const SignedBars = ({ data, zero }: { data: Pair[]; zero: number }) => (
  <g>
    {data.map(([i, v]) => {
      const h = Math.max(1, Math.round(Math.abs(v) / 3));
      return <rect key={i} x={slot(i) - 2} y={v > 0 ? zero - h : zero + 1} width="4" height={h} fill={v > 0 ? RED : BLUE} />;
    })}
    <rect x="0" y={zero} width={PLOT_W} height="1" fill="#000" />
  </g>
);

const range = (from: number, to: number, step: number) => {
  const out: number[] = [];
  for (let v = from; v <= to; v += step) out.push(v);
  return out;
};

/* A label that sits under a current-value tag is left off the axis. */
const without = (ticks: Tick[], label: string): Tick[] =>
  ticks.map(t => (t.label === label ? { y: t.y } : t));

const PRICE_TICKS: Tick[] = range(0, 10, 1).map(k => ({ y: Math.round(4 + k * 44.55), label: String(90000 - k * 5000) }));
const PRICE_MINOR = range(4, 449, 8.91);
const VOL_TICKS: Tick[] = [{ y: 17, label: '200000' }, { y: 34, label: '100000' }];
const VOL_MINOR = [0, 9, 26, 43];
const INST_TICKS: Tick[] = [{ y: 14, label: '0' }, { y: 30, label: '-500000' }];
const INST_MINOR = range(2, 38, 3);
const FOR_TICKS: Tick[] = [{ y: 30, label: '0' }, { y: 64, label: '-500000' }];
const FOR_MINOR = range(3, 85, 6.8);
const NEWS_TICKS: Tick[] = [{ y: 25, label: '20', dx: 37 }, { y: 50, label: '0', dx: 43 }];
const NEWS_MINOR = [0, 13, 25, 37];

const MiniClose = () => (
  <CloseButton aria-label="닫기">
    <Svg width="7" height="7" viewBox="0 0 7 7"><path d="M1 1l5 5M6 1L1 6" stroke="#fff" /></Svg>
  </CloseButton>
);

const Dock = () => (
  <CornerButton aria-label="아래로">
    <Svg width="9" height="9" viewBox="0 0 9 9"><path d="M1 1.500h7M4.500 2v5M3 7.500h3" stroke="#000" /><path d="M1 4h7L4.500 7.500z" fill="#000" stroke="none" /></Svg>
  </CornerButton>
);

const LegendItems = ({ items }: { items: [string, string][] }) => (
  <Legend>
    {items.map(([text, color]) => <React.Fragment key={text}><span>{text}</span><Dash $color={color} /></React.Fragment>)}
  </Legend>
);

/* ------------------------------------------------------------------ */
/* Bottom bar                                                          */
/* ------------------------------------------------------------------ */

const BottomBar = styled.footer`
  display: flex;
  align-items: center;
  height: 18px;
  background: #f0f0f0;
`;

const ScrollButton = styled.button`
  display: grid;
  place-items: center;
  flex: none;
  width: 17px;
  height: 17px;
  padding: 0;
  border: 1px solid;
  border-color: #fff #6a6a6a #6a6a6a #fff;
  background: #f0f0f0;
`;

const Track = styled.div`
  display: flex;
  flex: 1;
  height: 17px;
  background: #f8f8f8;
`;

const TrackSpace = styled.div`
  flex: 1174;
`;

const Thumb = styled.div`
  flex: 323;
  border: 1px solid;
  border-color: #fff #6a6a6a #6a6a6a #fff;
  background: #efefef;
`;

const BarTools = styled.div`
  display: flex;
  align-items: center;
  flex: none;
  padding: 0 1px 0 7px;
`;

const BarButton = styled.button`
  display: grid;
  place-items: center;
  width: 19px;
  height: 17px;
  padding: 0;
  border: 0;
  background: transparent;
  font-size: 12px;
  line-height: 16px;
`;

const ZoomSlider = styled.input`
  width: 56px;
  height: 17px;
  margin: 0 6px;
  appearance: none;
  background:
    linear-gradient(#000, #000) 2px 100% / 1px 3px no-repeat,
    linear-gradient(#000, #000) 54px 100% / 1px 3px no-repeat,
    linear-gradient(#8a8a8a, #8a8a8a) 0 5px / 100% 2px no-repeat;
  &::-webkit-slider-thumb {
    appearance: none;
    width: 4px;
    height: 10px;
    margin-top: -2px;
    border: 1px solid;
    border-color: #f0f0f0 #777 #777 #f0f0f0;
    background: #f0f0f0;
  }
`;

/* ------------------------------------------------------------------ */
/* Page                                                                */
/* ------------------------------------------------------------------ */

const DRAW_TOOLS = ['line', 'angle', 'arcs', 'fan', 'hline', 'vline', 'vlines4', 'vlines6', 'fib', 'fibBox', 'cycle', 'trend', 'parallel', 'parallel2', 'pencil', 'tools', 'palette', 'eraser', 'eraseAll', 'chartX'];
const TOOL_GROUPS = [
  ['arrowUp', 'arrowDown', 'arrowLeft', 'arrowRight', 'note'],
  ['circle', 'square'],
  ['zoomArea', 'zoomCandle'],
  ['zoomFit'],
  ['waveInfo', 'waves'],
  ['chartAlert', 'signal'],
];
const PERIODS = ['일', '주', '월', 'Q', '년', '분', '초', '틱', '1', '2', '5', '15'];

const IconButton = ({ name, ...rest }: { name: string; $w?: number; $pressed?: boolean; $menu?: boolean; disabled?: boolean }) => (
  <ToolButton aria-label={name} {...rest}><Icon name={name} /></ToolButton>
);

const TopToolbar = () => (
  <Toolbar>
    <ToolRow $indent={14}>
      <ToolButton $menu>주</ToolButton>
      <Field $w={72} $before={1}>
        <FieldInput $selected aria-label="종목코드" defaultValue="035900" />
        <DropButton aria-label="종목 목록"><Icon name="chevron" size={12} /></DropButton>
      </Field>
      <Group>
        <IconButton name="search" />
        <IconButton name="listDown" $w={22} />
        <ToolButton $w={12} aria-label="목록"><Icon name="chevron" size={10} /></ToolButton>
        <ToolButton>A</ToolButton>
        <ToolButton $pressed>K</ToolButton>
        <ToolButton>N</ToolButton>
      </Group>
      <Field $w={117} $before={3}>
        <FieldInput $color="#8c1414" aria-label="종목명" defaultValue="JYP Ent." />
        <Badge>신</Badge><Badge>대</Badge><Badge>40</Badge>
      </Field>
      <Group $before={2}>
        <IconButton name="play" $pressed />
        <IconButton name="back" />
        <Field $w={81}>
          <FieldInput aria-label="날짜" defaultValue="2021/06/14" />
          <DropButton aria-label="달력"><Icon name="chevron" size={12} /></DropButton>
        </Field>
      </Group>
      <Label htmlFor="span" $before={11} $after={2}>기간</Label>
      <Field $w={40}><FieldInput id="span" defaultValue="1000" /></Field>
      <Group $before={2}><IconButton name="candlesMove" $w={20} disabled /></Group>
      <Label htmlFor="shown" $before={4} $after={1}>중</Label>
      <Field $w={40}><FieldInput id="shown" defaultValue="216" /></Field>
      <Group $before={2}>
        {PERIODS.map((p, i) => <ToolButton key={p} $w={20} $pressed={i === 0}>{p}</ToolButton>)}
      </Group>
      <Group $before={2}><IconButton name="won" $w={20} $menu /></Group>
      <Group $gap={1} $end>
        <IconButton name="cloud" $w={30} />
        <ToolButton $w={20}>매</ToolButton>
        <ToolButton $w={20} $pressed>복</ToolButton>
        <ToolButton $w={40} $menu>전략</ToolButton>
        <ToolButton $w={40} $menu>도구</ToolButton>
        <IconButton name="folder" $w={20} />
        <IconButton name="save" $w={20} />
        <IconButton name="wrench" $w={20} />
      </Group>
    </ToolRow>
    <ToolRow>
      <IconButton name="up" $w={12} />
      <Group $before={2}>
        <IconButton name="leftRight" />
        <IconButton name="memo" />
        <ToolButton $w={60} $menu>가격지표</ToolButton>
      </Group>
      <Field $w={99} $before={4}>
        <TypeSelect aria-label="차트 유형"><option>일본식 차트</option></TypeSelect>
        <DropButton as="span"><Icon name="chevron" size={12} /></DropButton>
      </Field>
      <Group $before={5}>{DRAW_TOOLS.map(n => <IconButton key={n} name={n} />)}</Group>
      {TOOL_GROUPS.map(g => (
        <Group key={g[0]} $before={3}>{g.map(n => <IconButton key={n} name={n} />)}</Group>
      ))}
      <Group $end><ToolButton $w={40} $menu>보기</ToolButton></Group>
    </ToolRow>
  </Toolbar>
);

const Quotes = () => (
  <QuoteTable>
    <colgroup>{QUOTE.map(q => <col key={q.head} width={q.w || undefined} />)}</colgroup>
    <thead><tr>{QUOTE.map(q => <HeadCell key={q.head} $strong={q.strong}>{q.head}</HeadCell>)}</tr></thead>
    <tbody><tr>{QUOTE.map(q => <ValueCell key={q.head} $strong={q.strong} $red={q.red}>{q.value}</ValueCell>)}</tr></tbody>
  </QuoteTable>
);

const PricePanel = () => (
  <PanelRow $line>
    <AxisBox>
      <Axis side="left" height={449} ticks={PRICE_TICKS} minor={PRICE_MINOR} />
      <MoveButton aria-label="이동"><Icon name="leftRight" size={14} /></MoveButton>
    </AxisBox>
    <Plot
      height={449}
      after={<>
        <LegendItems items={[
          ['일본식차트(일간)', '#e00a0a'], ['MA_종가,5', '#000'], ['MA_종가,20', '#e00a0a'], ['MA_종가,60', '#3fc440'],
          ['MA_종가,120', '#0606c8'], ['MA_종가,10', '#4bd6c8'], ['MA_종가,240', '#e010e0'], ['MA_종가,480', '#417f7a'],
        ]} />
        <Note $color="#dc1428" style={{ left: pct(1002), top: 24 }}>최고가 : 87,400 (2025/02/20)</Note>
        <Note $color="#2828c8" style={{ left: pct(163), top: 411 }}>최저가 : 43,100 (2024/09/09)</Note>
        <Note $color="#000" $center style={{ left: pct(698), top: 148 }}>배당락</Note>
      </>}
    >
      {MA_LINES.map(l => <Line key={l.color} {...l} toY={v => v / 3 - 3} />)}
      {CANDLES.map((_, i) => <Candle key={i} i={i} />)}
      <path d="M1001 27.500H962M967 24l-5 3.500 5 3.500" fill="none" stroke="#000" />
      <path d="M163 421.500H124M129 418l-5 3.500 5 3.500" fill="none" stroke="#000" />
      <path d="M697 165h3v6h3l-4.500 5-4.500-5h3z" fill={BLUE} />
      <rect x="1740" y="0" width="1" height="362" />
      <rect x="1741" y="0" width="3" height="172" fill="#e01010" />
      <rect x="1741" y="172" width="3" height="1" />
      <rect x="1741" y="173" width="3" height="188" fill={BLUE} />
      <rect x="1741" y="361" width="3" height="1" />
    </Plot>
    <AxisBox>
      <Axis side="right" height={449} ticks={without(PRICE_TICKS, '75000')} minor={PRICE_MINOR} />
      <Tag $top={131}><TagValue>74,900</TagValue>5.49%</Tag>
    </AxisBox>
  </PanelRow>
);

const VolumePanel = () => (
  <PanelRow $line>
    <AxisBox>
      <Axis side="left" height={52} ticks={VOL_TICKS} minor={VOL_MINOR} />
      <UnitBox>*10</UnitBox>
    </AxisBox>
    <Plot height={52} after={<LegendItems items={[['거래량', '#e00a0a'], ['MA_거래량,10', '#000']]} />}>
      {VOLUME_TOPS.map((v, i) => {
        const h = Math.round((197 - v) / 3);
        return <rect key={i} x={slot(i) - 3} y={52 - h} width="6" height={h} fill={CANDLES[i].up ? RED : BLUE} />;
      })}
      <Line points={VOLUME_MA} color="#000" toY={v => v / 3 - 14} />
    </Plot>
    <AxisBox>
      <Axis side="right" height={52} ticks={without(VOL_TICKS, '100000')} minor={VOL_MINOR} />
      <MiniClose />
      <Tag $top={20}><TagValue>1,408K</TagValue>438.08%</Tag>
      <UnitMark />
    </AxisBox>
  </PanelRow>
);

const FlowPanel = ({ title, height, zero, data, ticks, minor }: {
  title: string; height: number; zero: number; data: Pair[]; ticks: Tick[]; minor: number[];
}) => (
  <PanelRow $line>
    <Axis side="left" height={height} ticks={ticks} minor={minor} />
    <Plot height={height} after={<><LegendItems items={[[title, '#e00a0a']]} /><Dock /></>}>
      <SignedBars data={data} zero={zero} />
    </Plot>
    <AxisBox>
      <Axis side="right" height={height} ticks={ticks} minor={minor} />
      <MiniClose />
    </AxisBox>
  </PanelRow>
);

const NewsPanel = () => (
  <PanelRow>
    <Axis side="left" height={51} ticks={NEWS_TICKS} minor={NEWS_MINOR} />
    <Plot height={51} after={<><LegendItems items={[['뉴스/공시', '#8f2c14']]} /><Dock /></>}>
      {NEWS.map(([i, v]) => <rect key={i} x={slot(i) - 2} y={50 - Math.round(v / 3)} width="4" height={Math.round(v / 3)} fill="#962d0f" />)}
      <rect x="0" y="50" width={PLOT_W} height="1" />
    </Plot>
    <AxisBox>
      <Axis side="right" height={51} ticks={NEWS_TICKS} minor={NEWS_MINOR} />
      <MiniClose />
    </AxisBox>
  </PanelRow>
);

const DateAxis = () => (
  <PanelRow>
    <span />
    <DateBox>
      <PlotSvg height={18} viewBox={`0 0 ${PLOT_W} 18`} preserveAspectRatio="none">
        {MONTHS.map(m => <rect key={m.x} x={m.x} y="0" width="1" height={m.year ? 18 : 5} />)}
      </PlotSvg>
      <DateLabel style={{ left: 0 }}>2024/08</DateLabel>
      {MONTHS.map(m => <DateLabel key={m.x} style={{ left: pct(m.x) }}>{m.label}</DateLabel>)}
    </DateBox>
    <span />
  </PanelRow>
);

const Footer = () => (
  <BottomBar>
    <ScrollButton aria-label="왼쪽으로"><Icon name="scrollLeft" /></ScrollButton>
    <Track><TrackSpace /><Thumb /></Track>
    <ScrollButton aria-label="오른쪽으로"><Icon name="scrollRight" /></ScrollButton>
    <BarTools>
      {['collapse', 'rewind', 'stop', 'forward', 'compress', 'chartA', 'plus', 'minus'].map(n => (
        <BarButton key={n} aria-label={n}><Icon name={n} /></BarButton>
      ))}
      <BarButton>1:1</BarButton>
      <ZoomSlider type="range" aria-label="확대" min="0" max="100" defaultValue="24" />
      {['first', 'last', 'memo', 'leftRight'].map(n => (
        <BarButton key={n} aria-label={n}><Icon name={n} /></BarButton>
      ))}
    </BarTools>
  </BottomBar>
);

export default function App() {
  return (
    <Page>
      <GlobalStyle />
      <TopToolbar />
      <Quotes />
      <Chart>
        <PricePanel />
        <VolumePanel />
        <FlowPanel title="기관_수량" height={39} zero={14} data={INSTITUTION} ticks={INST_TICKS} minor={INST_MINOR} />
        <FlowPanel title="외국인_수량" height={86} zero={30} data={FOREIGN} ticks={FOR_TICKS} minor={FOR_MINOR} />
        <NewsPanel />
        <DateAxis />
        <SideHandle aria-label="펼치기">
          <Svg width="6" height="8" viewBox="0 0 6 8"><path d="M1.500 1.500L4 4 1.500 6.500" stroke="#000" /></Svg>
        </SideHandle>
      </Chart>
      <Footer />
    </Page>
  );
}
